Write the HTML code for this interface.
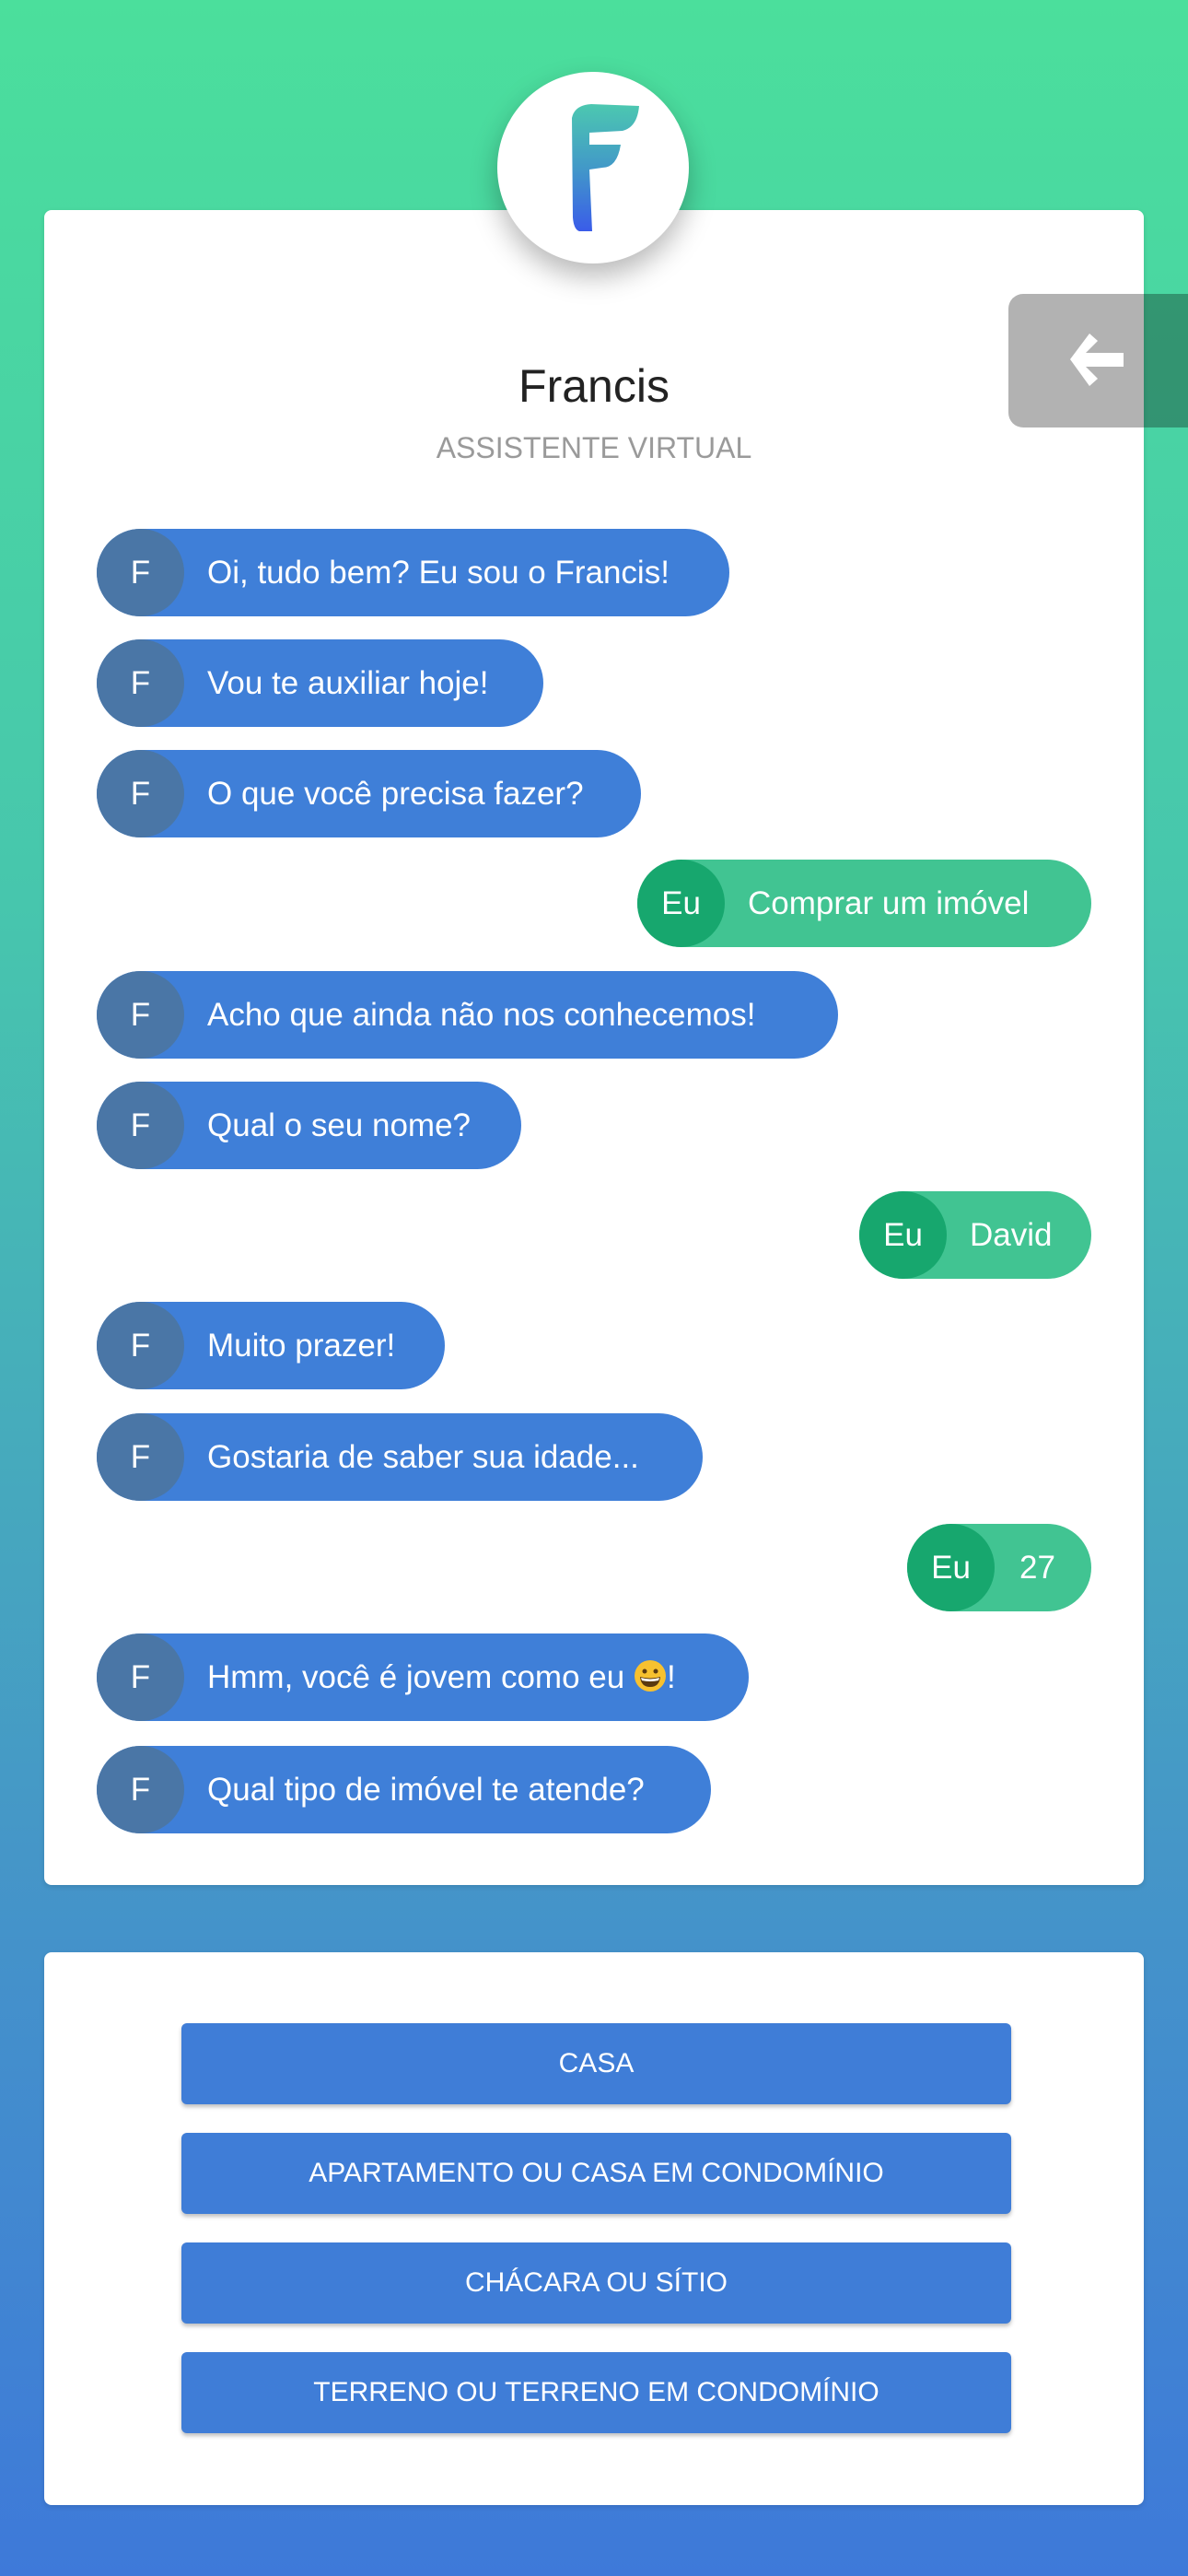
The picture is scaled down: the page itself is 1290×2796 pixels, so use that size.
<!DOCTYPE html>
<html><head><meta charset="utf-8"><style>
*{margin:0;padding:0;box-sizing:border-box}
body{width:1290px;height:2796px;overflow:hidden;font-family:"Liberation Sans",sans-serif;background:linear-gradient(180deg,#4bdf9c 0%,#47c6ad 35%,#4596c8 72%,#3e79d9 100%);position:relative}
.card{position:absolute;left:48px;width:1194px;background:#fff;border-radius:8px;box-shadow:0 2px 6px rgba(0,0,0,.12)}
.logo{position:absolute;left:540px;top:78px;width:208px;height:208px;border-radius:50%;background:#fff;box-shadow:0 14px 30px rgba(0,0,0,.28);z-index:3}
.back{position:absolute;left:1095px;top:319px;width:195px;height:145px;background:rgba(0,0,0,.3);border-radius:16px 0 0 16px;z-index:4}
.title{position:absolute;left:0;width:1290px;text-align:center;top:390px;font-size:50px;color:#222;z-index:2}
.sub{position:absolute;left:0;width:1290px;text-align:center;top:468px;font-size:32px;color:#9a9a9a;z-index:2}
.b{position:absolute;height:95px;border-radius:48px;color:#fff;font-size:35px;line-height:95px;white-space:nowrap;z-index:2}
.b .a{position:absolute;left:0;top:0;width:95px;height:95px;border-radius:50%;text-align:center}
.l{left:105px;background:#3f7fd8}
.l .a{background:#4a76a6}
.l .t{position:absolute;left:120px}
.r{background:#41c492}
.r .a{background:#17a76e}
.r .t{position:absolute;left:120px}
.btn{position:absolute;left:197px;width:901px;height:88px;background:#3f7dd7;border-radius:6px;color:#fff;font-size:30px;text-align:center;line-height:88px;box-shadow:0 3px 4px rgba(0,0,0,.25);z-index:2}
</style></head><body>
<div class="card" style="top:228px;height:1818px"></div>
<div class="card" style="top:2119px;height:600px"></div>
<div class="logo"><svg width="208" height="208" viewBox="0 0 208 208">
<defs><linearGradient id="g" x1="0" y1="0" x2="0" y2="1"><stop offset="0" stop-color="#4cc8b0"/><stop offset=".5" stop-color="#4299c8"/><stop offset="1" stop-color="#3a5ce9"/></linearGradient></defs>
<path d="M81 50 Q84 36 102 35 L154 37 Q152 60 136 64 L100 66 L100 79 L134 79 Q130 104 114 104 L100 106 L103 173 L89 173 Q83 171 82 158 Z" fill="url(#g)"/>
</svg></div>
<div class="back"><svg width="195" height="145" viewBox="0 0 195 145"><path d="M67 71 L88 43 L97 51 L84 64 L125 64 L125 79 L84 79 L97 92 L88 100 Z" fill="#fff"/></svg></div>
<div class="title">Francis</div>
<div class="sub">ASSISTENTE VIRTUAL</div>

<div class="b l" style="top:574px;width:687px"><span class="a">F</span><span class="t">Oi, tudo bem? Eu sou o Francis!</span></div>
<div class="b l" style="top:694px;width:485px"><span class="a">F</span><span class="t">Vou te auxiliar hoje!</span></div>
<div class="b l" style="top:814px;width:591px"><span class="a">F</span><span class="t">O que você precisa fazer?</span></div>
<div class="b r" style="top:933px;left:692px;width:493px"><span class="a">Eu</span><span class="t" style="left:120px">Comprar um imóvel</span></div>
<div class="b l" style="top:1054px;width:805px"><span class="a">F</span><span class="t">Acho que ainda não nos conhecemos!</span></div>
<div class="b l" style="top:1174px;width:461px"><span class="a">F</span><span class="t">Qual o seu nome?</span></div>
<div class="b r" style="top:1293px;left:933px;width:252px"><span class="a">Eu</span><span class="t" style="left:120px">David</span></div>
<div class="b l" style="top:1413px;width:378px"><span class="a">F</span><span class="t">Muito prazer!</span></div>
<div class="b l" style="top:1534px;width:658px"><span class="a">F</span><span class="t">Gostaria de saber sua idade...</span></div>
<div class="b r" style="top:1654px;left:985px;width:200px"><span class="a">Eu</span><span class="t" style="left:122px">27</span></div>
<div class="b l" style="top:1773px;width:708px"><span class="a">F</span><span class="t">Hmm, você é jovem como eu <svg width="36" height="36" viewBox="0 0 36 36" style="vertical-align:-5px"><circle cx="18" cy="18" r="17" fill="#f7c12f"/><circle cx="12" cy="13" r="2.5" fill="#5a3a10"/><circle cx="24" cy="13" r="2.5" fill="#5a3a10"/><path d="M7 19 Q18 22 29 19 Q28 30 18 30 Q8 30 7 19Z" fill="#5a3a10"/><path d="M8 20 Q18 23 28 20 L27 23 Q18 25 9 23Z" fill="#fff"/></svg>!</span></div>
<div class="b l" style="top:1895px;width:667px"><span class="a">F</span><span class="t">Qual tipo de imóvel te atende?</span></div>

<div class="btn" style="top:2196px">CASA</div>
<div class="btn" style="top:2315px">APARTAMENTO OU CASA EM CONDOMÍNIO</div>
<div class="btn" style="top:2434px">CHÁCARA OU SÍTIO</div>
<div class="btn" style="top:2553px">TERRENO OU TERRENO EM CONDOMÍNIO</div>
</body></html>
